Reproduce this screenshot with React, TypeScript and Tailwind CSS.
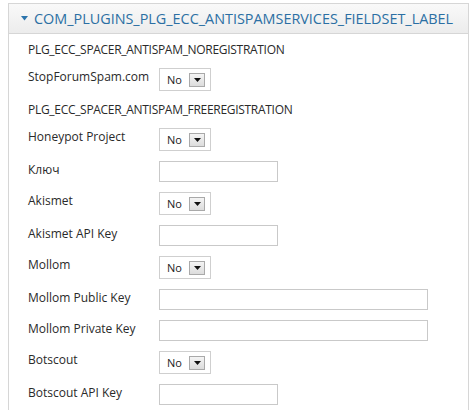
import React from "react";

const font = { fontFamily: '"Open Sans", "Noto Sans", Arial, sans-serif' };

function Select() {
  return (
    <div className="relative h-[23px] w-[52px] border border-[#cfcfcf] bg-white">
      <span className="absolute left-[7px] top-[3px] text-[11px] leading-[15px] text-[#222]">No</span>
      <div className="absolute right-[5px] top-[4px] flex h-[14px] w-[16px] items-center justify-center border border-[#a9a9a9] bg-gradient-to-b from-[#f4f4f4] to-[#dcdcdc]">
        <svg width="7" height="4" viewBox="0 0 7 4">
          <path d="M0 0 L7 0 L3.5 4 Z" fill="#111" />
        </svg>
      </div>
    </div>
  );
}

function Input({ wide }: { wide?: boolean }) {
  return <div className={`h-[21px] border border-[#c9c9c9] bg-white ${wide ? "w-[269px]" : "w-[119px]"}`} />;
}

function Row({ label, children }: { label: string; children: React.ReactNode }) {
  return (
    <div className="flex items-start">
      <div className="w-[131px] text-[12px] leading-[17px] text-[#2a2a2a]">{label}</div>
      {children}
    </div>
  );
}

function Spacer({ text }: { text: string }) {
  return <div className="h-[17px] text-[12px] leading-[17px] tracking-[-0.3px] text-[#2a2a2a]">{text}</div>;
}

export default function App() {
  return (
    <div className="h-[410px] w-[474px] overflow-hidden bg-white" style={font}>
      <div className="ml-[8px] mt-[3px] w-[461px] border border-[#d6d6d6] pb-[20px]">
        <div className="flex h-[30px] items-center overflow-hidden border-b border-[#d6d6d6] bg-gradient-to-b from-[#f9f9f9] to-[#ececec] pl-[12px]">
          <svg width="7" height="5" viewBox="0 0 7 5" className="mr-[6px] shrink-0">
            <path d="M0 0 L7 0 L3.5 4.5 Z" fill="#2b74ac" />
          </svg>
          <span className="whitespace-nowrap text-[14.4px] leading-[20px] text-[#2b6fa3]">COM_PLUGINS_PLG_ECC_ANTISPAMSERVICES_FIELDSET_LABEL</span>
        </div>
        <div className="flex flex-col gap-[10px] pl-[19px] pt-[7px]">
          <Spacer text="PLG_ECC_SPACER_ANTISPAM_NOREGISTRATION" />
          <Row label="StopForumSpam.com"><Select /></Row>
          <Spacer text="PLG_ECC_SPACER_ANTISPAM_FREEREGISTRATION" />
          <Row label="Honeypot Project"><Select /></Row>
          <Row label="Ключ"><Input /></Row>
          <Row label="Akismet"><Select /></Row>
          <Row label="Akismet API Key"><Input /></Row>
          <Row label="Mollom"><Select /></Row>
          <Row label="Mollom Public Key"><Input wide /></Row>
          <Row label="Mollom Private Key"><Input wide /></Row>
          <Row label="Botscout"><Select /></Row>
          <Row label="Botscout API Key"><Input /></Row>
        </div>
      </div>
    </div>
  );
}
